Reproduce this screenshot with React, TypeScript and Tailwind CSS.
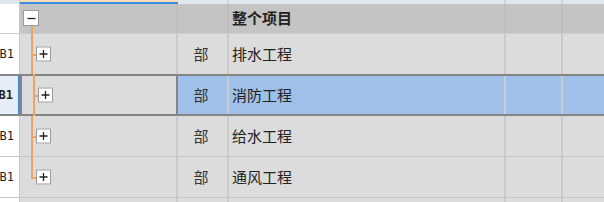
import React from "react";

const cjk = { fontFamily: '"Noto Sans CJK SC", "Noto Sans", sans-serif' };
const mono = { fontFamily: '"DejaVu Sans Mono", "Liberation Mono", monospace' };

function Box({ minus }: { minus?: boolean }) {
  return (
    <span
      className={`absolute flex items-center justify-center bg-white border border-[#9a9a9a] ${
        minus ? "left-[3px] top-[6px] w-[16px] h-[16px]" : "left-[16px] top-1/2 -translate-y-1/2 w-[15px] h-[15px]"
      }`}
    >
      <svg width="11" height="11" viewBox="0 0 11 11">
        <path d="M1.5 5.5h8" stroke="#222" strokeWidth="1.3" />
        {!minus && <path d="M5.5 1.5v8" stroke="#222" strokeWidth="1.3" />}
      </svg>
    </span>
  );
}

function DataRow({
  name,
  selected,
  bordered,
  last,
}: {
  name: string;
  selected?: boolean;
  bordered?: boolean;
  last?: boolean;
}) {
  return (
    <div
      className={`flex ${
        selected
          ? "h-[42px] border-y-2 border-[#858585] bg-[#9fc0e9]"
          : bordered
          ? "h-[41px] border-b border-[#c6c6c6] bg-[#dcdcdc]"
          : "h-[40px] bg-[#dcdcdc]"
      }`}
    >
      <div
        className={`w-[20px] shrink-0 flex items-center justify-end pr-[5px] text-[12px] text-[#222] overflow-hidden whitespace-nowrap ${
          selected ? "bg-[#e5edf8] border-r-2 border-[#3d8ce8] font-bold" : "bg-white border-r border-[#c8c8c8]"
        }`}
        style={mono}
      >
        B1
      </div>
      <div
        className={`relative w-[158px] shrink-0 bg-[#dcdcdc] ${
          selected ? "border-2 border-[#858585] -my-[2px]" : "border-r-2 border-[#cacaca]"
        }`}
      >
        <span
          className={`absolute left-[11px] w-[1.5px] bg-[#f2a45c] ${
            last ? "top-0 h-1/2" : selected ? "-top-[2px] -bottom-[2px]" : bordered ? "top-0 -bottom-[1px]" : "top-0 bottom-0"
          }`}
        />
        <span className="absolute left-[11px] top-1/2 w-[6px] h-[1.5px] bg-[#f2a45c]" />
        <Box />
      </div>
      <div
        className="w-[51px] shrink-0 flex items-center justify-center pr-[3px] text-[15px] text-[#333] border-r-2 border-[#cacaca]"
        style={cjk}
      >
        部
      </div>
      <div
        className="w-[277px] shrink-0 flex items-center pl-[3px] text-[15px] text-[#222] border-r-2 border-[#cacaca]"
        style={cjk}
      >
        {name}
      </div>
      <div className="w-[57px] shrink-0 border-r-2 border-[#cacaca]" />
      <div className="flex-1" />
    </div>
  );
}

export default function App() {
  return (
    <div className="w-[604px] h-[202px] overflow-hidden bg-[#dcdcdc]">
      <div className="flex h-[4px]">
        <div className="w-[20px] shrink-0 bg-[#dfe5ec] border-r border-[#c8c8c8]" />
        <div className="w-[158px] shrink-0 bg-[#f9dfb4] border-b-2 border-[#3d8ce8]" />
        <div className="w-[51px] shrink-0 bg-[#e3e8ef] border-r-2 border-[#cfd4da]" />
        <div className="w-[277px] shrink-0 bg-[#e3e8ef] border-r-2 border-[#cfd4da]" />
        <div className="w-[57px] shrink-0 bg-[#e3e8ef] border-r-2 border-[#cfd4da]" />
        <div className="flex-1 bg-[#e3e8ef]" />
      </div>
      <div className="flex h-[30px] bg-[#c4c4c4] border-b border-[#cdcdcd]">
        <div className="w-[20px] shrink-0 bg-white border-r border-[#c8c8c8]" />
        <div className="relative w-[158px] shrink-0 border-r-2 border-[#bebebe]">
          <Box minus />
          <span className="absolute left-[11px] top-[22px] -bottom-[1px] w-[1.5px] bg-[#f2a45c]" />
        </div>
        <div className="w-[51px] shrink-0 border-r-2 border-[#bebebe]" />
        <div
          className="w-[277px] shrink-0 flex items-center pl-[3px] text-[15px] font-bold text-[#222] border-r-2 border-[#bebebe]"
          style={cjk}
        >
          整个项目
        </div>
        <div className="w-[57px] shrink-0 border-r-2 border-[#bebebe]" />
        <div className="flex-1" />
      </div>
      <DataRow name="排水工程" />
      <DataRow name="消防工程" selected />
      <DataRow name="给水工程" bordered />
      <DataRow name="通风工程" bordered last />
      <div className="flex h-[4px]">
        <div className="w-[20px] shrink-0 bg-white border-r border-[#c8c8c8]" />
        <div className="w-[158px] shrink-0 border-r-2 border-[#cacaca]" />
        <div className="w-[51px] shrink-0 border-r-2 border-[#cacaca]" />
        <div className="w-[277px] shrink-0 border-r-2 border-[#cacaca]" />
        <div className="w-[57px] shrink-0 border-r-2 border-[#cacaca]" />
      </div>
    </div>
  );
}
